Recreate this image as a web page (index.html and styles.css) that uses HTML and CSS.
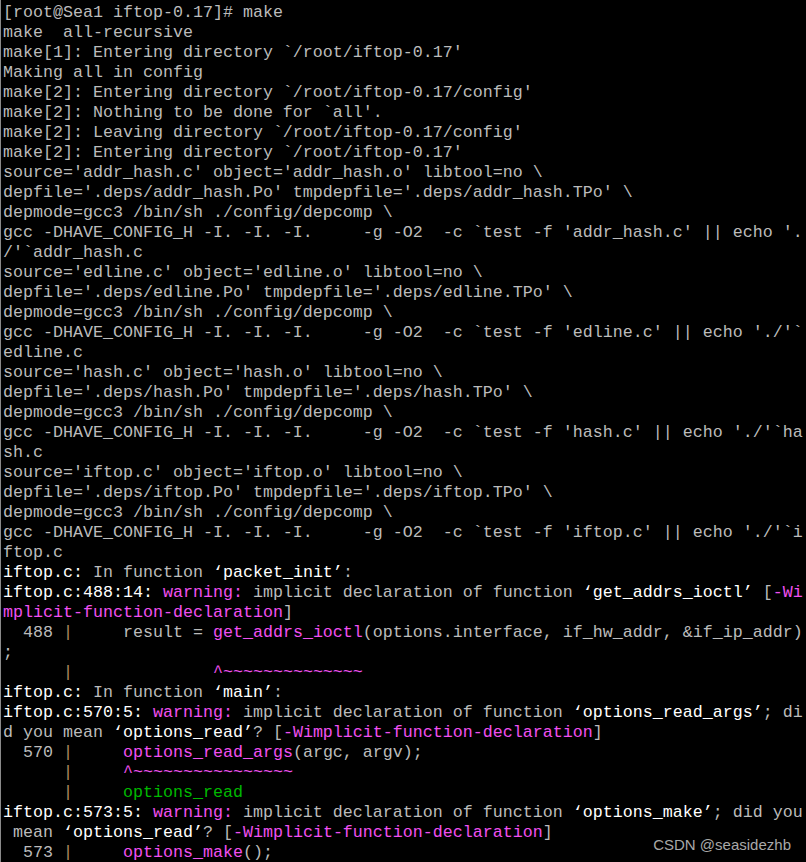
FILE: index.html
```html
<!DOCTYPE html>
<html>
<head>
<meta charset="utf-8">
<link rel="stylesheet" href="styles.css">
</head>
<body>
<div class="screen">
<pre class="term">[root@Sea1 iftop-0.17]# make
make  all-recursive
make[1]: Entering directory `/root/iftop-0.17'
Making all in config
make[2]: Entering directory `/root/iftop-0.17/config'
make[2]: Nothing to be done for `all'.
make[2]: Leaving directory `/root/iftop-0.17/config'
make[2]: Entering directory `/root/iftop-0.17'
source='addr_hash.c' object='addr_hash.o' libtool=no \
depfile='.deps/addr_hash.Po' tmpdepfile='.deps/addr_hash.TPo' \
depmode=gcc3 /bin/sh ./config/depcomp \
gcc -DHAVE_CONFIG_H -I. -I. -I.     -g -O2  -c `test -f 'addr_hash.c' || echo '.
/'`addr_hash.c
source='edline.c' object='edline.o' libtool=no \
depfile='.deps/edline.Po' tmpdepfile='.deps/edline.TPo' \
depmode=gcc3 /bin/sh ./config/depcomp \
gcc -DHAVE_CONFIG_H -I. -I. -I.     -g -O2  -c `test -f 'edline.c' || echo './'`
edline.c
source='hash.c' object='hash.o' libtool=no \
depfile='.deps/hash.Po' tmpdepfile='.deps/hash.TPo' \
depmode=gcc3 /bin/sh ./config/depcomp \
gcc -DHAVE_CONFIG_H -I. -I. -I.     -g -O2  -c `test -f 'hash.c' || echo './'`ha
sh.c
source='iftop.c' object='iftop.o' libtool=no \
depfile='.deps/iftop.Po' tmpdepfile='.deps/iftop.TPo' \
depmode=gcc3 /bin/sh ./config/depcomp \
gcc -DHAVE_CONFIG_H -I. -I. -I.     -g -O2  -c `test -f 'iftop.c' || echo './'`i
ftop.c
<span class="b">iftop.c:</span> In function <span class="b">‘packet_init’</span>:
<span class="b">iftop.c:488:14:</span> <span class="m">warning:</span> implicit declaration of function <span class="b">‘get_addrs_ioctl’</span> [<span class="m">-Wi
mplicit-function-declaration</span>]
  488 <span class="p">|</span>     result = <span class="m">get_addrs_ioctl</span>(options.interface, if_hw_addr, &amp;if_ip_addr)
;
      <span class="p">|</span>              <span class="m">^~~~~~~~~~~~~~~</span>
<span class="b">iftop.c:</span> In function <span class="b">‘main’</span>:
<span class="b">iftop.c:570:5:</span> <span class="m">warning:</span> implicit declaration of function <span class="b">‘options_read_args’</span>; di
d you mean <span class="b">‘options_read’</span>? [<span class="m">-Wimplicit-function-declaration</span>]
  570 <span class="p">|</span>     <span class="m">options_read_args</span>(argc, argv);
      <span class="p">|</span>     <span class="m">^~~~~~~~~~~~~~~~~</span>
      <span class="p">|</span>     <span class="g">options_read</span>
<span class="b">iftop.c:573:5:</span> <span class="m">warning:</span> implicit declaration of function <span class="b">‘options_make’</span>; did you
 mean <span class="b">‘options_read’</span>? [<span class="m">-Wimplicit-function-declaration</span>]
  573 <span class="p">|</span>     <span class="m">options_make</span>();</pre>
<div class="mark">CSDN @seasidezhb</div>
</div>
</body>
</html>
```

FILE: styles.css
```css
html, body {
  margin: 0;
  padding: 0;
  background: #000;
  overflow: hidden;
}
.screen {
  position: relative;
  width: 806px;
  height: 862px;
  box-sizing: border-box;
  border-left: 1px solid #8a8a8a;
  background: #000;
  overflow: hidden;
}
.term {
  margin: 0;
  padding: 3px 0 0 2px;
  font-family: "Liberation Mono", "Courier New", monospace;
  font-size: 16.6667px;
  line-height: 20px;
  color: #bbbbbb;
  white-space: pre;
}
.b { color: #ffffff; }
.m { color: #f050f0; }
.g { color: #00b800; }
.p { color: #b08a60; }
.mark {
  position: absolute;
  right: 15px;
  bottom: 9px;
  font-family: "Liberation Sans", Arial, sans-serif;
  font-size: 15px;
  color: #a8a8a8;
}
```
